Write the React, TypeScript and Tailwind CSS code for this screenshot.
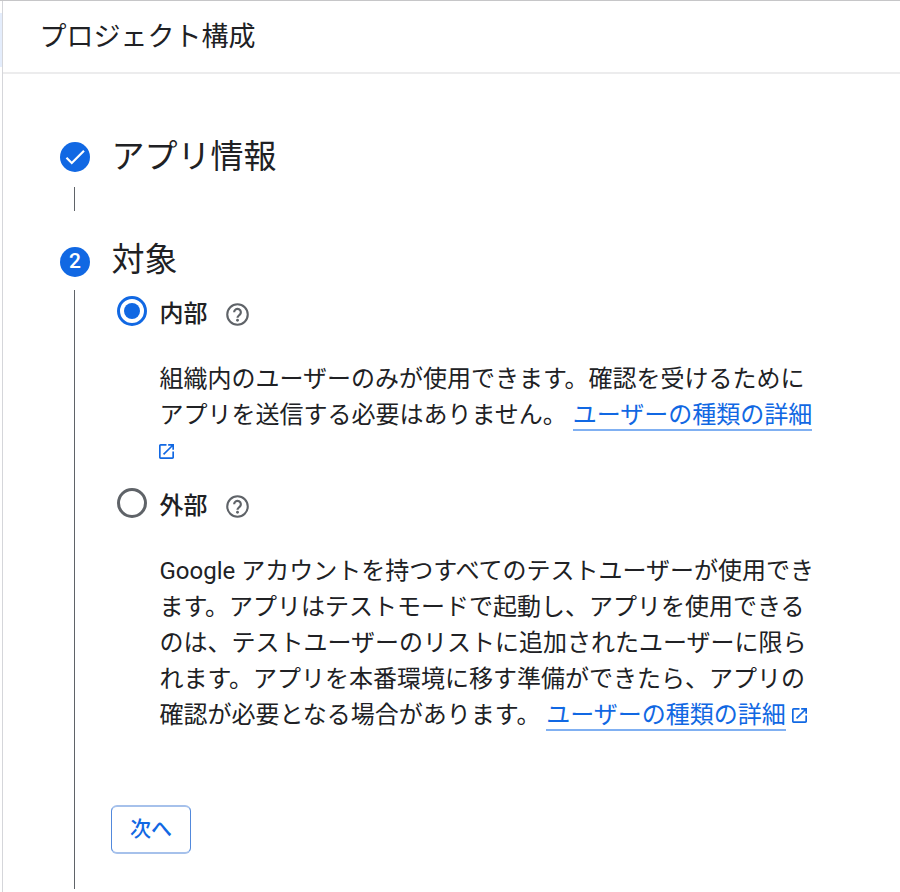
import React from "react";

function Help() {
  return (
    <svg viewBox="0 0 24 24" className="mt-[3px] size-[23px] shrink-0" fill="none" stroke="#5f6368">
      <circle cx="12" cy="12" r="10.700" strokeWidth="2.200" />
      <path d="M8.500 9.700a3.500 3.500 0 1 1 5.500 2.800c-1.200 1-2 1.500-2 3" strokeWidth="2.300" />
      <circle cx="12" cy="18" r="1.450" fill="#5f6368" stroke="none" />
    </svg>
  );
}

function External({ className = "" }: { className?: string }) {
  return (
    <svg viewBox="3 3 18 18" className={`relative inline-block size-[15px] fill-[#1168e3] ${className}`}>
      <path d="M19 19H5V5h7V3H5c-1.110 0-2 .9-2 2v14c0 1.100.89 2 2 2h14c1.100 0 2-.9 2-2v-7h-2v7zM14 3v2h3.590l-9.830 9.830 1.410 1.410L19 6.410V10h2V3h-7z" />
    </svg>
  );
}

function Radio({ checked = false }: { checked?: boolean }) {
  return (
    <span className={`flex size-[30px] shrink-0 items-center justify-center rounded-full border-[3px] ${checked ? "border-[#1168e3]" : "border-[#5f6368]"}`}>
      {checked && <span className="size-[16px] rounded-full bg-[#1168e3]" />}
    </span>
  );
}

function Link() {
  return <span className="inline-block h-[34px] border-b-2 border-[#80b0f2] text-[#1168e3]">ユーザーの種類の詳細</span>;
}

export default function App() {
  return (
    <div className="flex h-[892px] w-[900px] flex-col overflow-hidden border-t border-[#c6c6c8] bg-white font-[Roboto,'Noto_Sans_CJK_JP',sans-serif] text-[#202124]">
      <div className="flex min-h-0 flex-1">
        <div className="w-[3px] shrink-0 border-r border-[#d5d6da] bg-white pt-[12px]"><div className="h-[54px] bg-[#e4edfc]" /></div>
        <div className="flex-1">
          <header className="flex h-[73px] items-center border-b-2 border-[#ececed] pl-[36.500px] pt-px text-[27px]">プロジェクト構成</header>
          <main className="pl-[57px] pt-[63px]">
            <div className="flex h-[40px] items-center gap-[21.500px]">
              <span className="flex size-[30px] items-center justify-center rounded-full bg-[#1168e3]">
                <svg viewBox="0 0 24 24" className="size-[26px] fill-white"><path d="M9 16.170 4.830 12l-1.420 1.410L9 19 21 7l-1.410-1.410z" /></svg>
              </span>
              <h2 className="text-[33px]">アプリ情報</h2>
            </div>
            <div className="ml-[14px] mt-[10px] h-[24px] w-px bg-[#5f6368]" />
            <div className="mt-[28px] flex h-[42px] items-center gap-[21.500px]">
              <span className="mt-[3px] flex size-[30px] items-center justify-center rounded-full bg-[#1168e3] text-[21px] font-medium text-white">2</span>
              <h2 className="text-[33px]">対象</h2>
            </div>
            <div className="ml-[14px] mt-[9px] flex h-[599px] border-l border-[#5f6368] pl-[36px]">
              <div className="text-[24px] leading-[36px]">
                <div className="ml-[6px] flex h-[42px] items-center"><Radio checked /><span className="ml-[12.500px] mr-[18.500px] pt-[6px] font-medium">内部</span><span className="pt-[3px]"><Help /></span></div>
                <p className="ml-[48.500px] mt-[29px]">組織内のユーザーのみが使用できます。確認を受けるために<br />アプリを送信する必要はありません。 <Link /><br /><External className="-left-[0.500px] -top-px" /></p>
                <div className="ml-[6px] mt-[13px] flex h-[42px] items-center"><Radio /><span className="ml-[12.500px] mr-[18.500px] pt-[6px] font-medium">外部</span><span className="pt-[3px]"><Help /></span></div>
                <p className="ml-[48.500px] mt-[29px]">Google アカウントを持つすべてのテストユーザーが使用でき<br />ます。アプリはテストモードで起動し、アプリを使用できる<br />のは、テストユーザーのリストに追加されたユーザーに限ら<br />れます。アプリを本番環境に移す準備ができたら、アプリの<br />確認が必要となる場合があります。 <Link /><External className="-top-px ml-[6px]" /></p>
                <button className="mt-[72px] h-[49px] w-[80px] rounded-[6px] border-x border-y-2 border-x-[#5289dc] border-y-[#a6c1eb] pb-px text-[21px] font-medium text-[#1168e3]">次へ</button>
              </div>
            </div>
          </main>
        </div>
      </div>
    </div>
  );
}
